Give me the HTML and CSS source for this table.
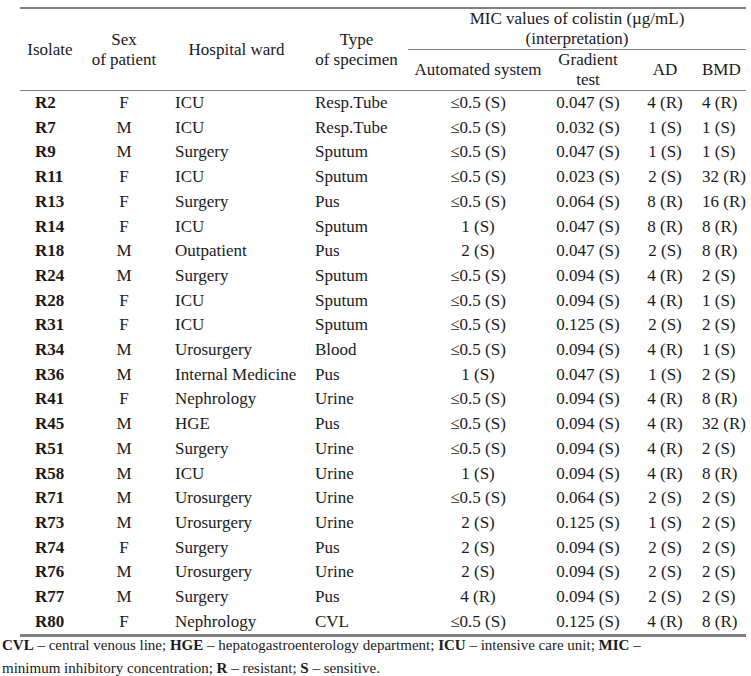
FILE: index.html
```html
<!DOCTYPE html>
<html lang="en">
<head>
<meta charset="utf-8">
<title>MIC values of colistin</title>
<link rel="stylesheet" href="styles.css">
</head>
<body>
<div class="page">
  <table class="mic">
    <colgroup>
      <col class="c-iso"><col class="c-sex"><col class="c-ward"><col class="c-type">
      <col class="c-auto"><col class="c-grad"><col class="c-ad"><col class="c-bmd">
    </colgroup>
    <thead>
      <tr class="h1">
        <th rowspan="2">Isolate</th>
        <th rowspan="2">Sex<br>of patient</th>
        <th rowspan="2">Hospital ward</th>
        <th rowspan="2">Type<br>of specimen</th>
        <th colspan="4" class="mic-group">MIC values of colistin (µg/mL)<br>(interpretation)</th>
      </tr>
      <tr class="h2">
        <th>Automated system</th>
        <th>Gradient<br>test</th>
        <th>AD</th>
        <th class="bmd">BMD</th>
      </tr>
    </thead>
    <tbody>
      <tr><td class="iso">R2</td><td>F</td><td class="ward">ICU</td><td class="type">Resp.Tube</td><td>≤0.5 (S)</td><td>0.047 (S)</td><td>4 (R)</td><td class="bmd">4 (R)</td></tr>
      <tr><td class="iso">R7</td><td>M</td><td class="ward">ICU</td><td class="type">Resp.Tube</td><td>≤0.5 (S)</td><td>0.032 (S)</td><td>1 (S)</td><td class="bmd">1 (S)</td></tr>
      <tr><td class="iso">R9</td><td>M</td><td class="ward">Surgery</td><td class="type">Sputum</td><td>≤0.5 (S)</td><td>0.047 (S)</td><td>1 (S)</td><td class="bmd">1 (S)</td></tr>
      <tr><td class="iso">R11</td><td>F</td><td class="ward">ICU</td><td class="type">Sputum</td><td>≤0.5 (S)</td><td>0.023 (S)</td><td>2 (S)</td><td class="bmd">32 (R)</td></tr>
      <tr><td class="iso">R13</td><td>F</td><td class="ward">Surgery</td><td class="type">Pus</td><td>≤0.5 (S)</td><td>0.064 (S)</td><td>8 (R)</td><td class="bmd">16 (R)</td></tr>
      <tr><td class="iso">R14</td><td>F</td><td class="ward">ICU</td><td class="type">Sputum</td><td>1 (S)</td><td>0.047 (S)</td><td>8 (R)</td><td class="bmd">8 (R)</td></tr>
      <tr><td class="iso">R18</td><td>M</td><td class="ward">Outpatient</td><td class="type">Pus</td><td>2 (S)</td><td>0.047 (S)</td><td>2 (S)</td><td class="bmd">8 (R)</td></tr>
      <tr><td class="iso">R24</td><td>M</td><td class="ward">Surgery</td><td class="type">Sputum</td><td>≤0.5 (S)</td><td>0.094 (S)</td><td>4 (R)</td><td class="bmd">2 (S)</td></tr>
      <tr><td class="iso">R28</td><td>F</td><td class="ward">ICU</td><td class="type">Sputum</td><td>≤0.5 (S)</td><td>0.094 (S)</td><td>4 (R)</td><td class="bmd">1 (S)</td></tr>
      <tr><td class="iso">R31</td><td>F</td><td class="ward">ICU</td><td class="type">Sputum</td><td>≤0.5 (S)</td><td>0.125 (S)</td><td>2 (S)</td><td class="bmd">2 (S)</td></tr>
      <tr><td class="iso">R34</td><td>M</td><td class="ward">Urosurgery</td><td class="type">Blood</td><td>≤0.5 (S)</td><td>0.094 (S)</td><td>4 (R)</td><td class="bmd">1 (S)</td></tr>
      <tr><td class="iso">R36</td><td>M</td><td class="ward">Internal Medicine</td><td class="type">Pus</td><td>1 (S)</td><td>0.047 (S)</td><td>1 (S)</td><td class="bmd">2 (S)</td></tr>
      <tr><td class="iso">R41</td><td>F</td><td class="ward">Nephrology</td><td class="type">Urine</td><td>≤0.5 (S)</td><td>0.094 (S)</td><td>4 (R)</td><td class="bmd">8 (R)</td></tr>
      <tr><td class="iso">R45</td><td>M</td><td class="ward">HGE</td><td class="type">Pus</td><td>≤0.5 (S)</td><td>0.094 (S)</td><td>4 (R)</td><td class="bmd">32 (R)</td></tr>
      <tr><td class="iso">R51</td><td>M</td><td class="ward">Surgery</td><td class="type">Urine</td><td>≤0.5 (S)</td><td>0.094 (S)</td><td>4 (R)</td><td class="bmd">2 (S)</td></tr>
      <tr><td class="iso">R58</td><td>M</td><td class="ward">ICU</td><td class="type">Urine</td><td>1 (S)</td><td>0.094 (S)</td><td>4 (R)</td><td class="bmd">8 (R)</td></tr>
      <tr><td class="iso">R71</td><td>M</td><td class="ward">Urosurgery</td><td class="type">Urine</td><td>≤0.5 (S)</td><td>0.064 (S)</td><td>2 (S)</td><td class="bmd">2 (S)</td></tr>
      <tr><td class="iso">R73</td><td>M</td><td class="ward">Urosurgery</td><td class="type">Urine</td><td>2 (S)</td><td>0.125 (S)</td><td>1 (S)</td><td class="bmd">2 (S)</td></tr>
      <tr><td class="iso">R74</td><td>F</td><td class="ward">Surgery</td><td class="type">Pus</td><td>2 (S)</td><td>0.094 (S)</td><td>2 (S)</td><td class="bmd">2 (S)</td></tr>
      <tr><td class="iso">R76</td><td>M</td><td class="ward">Urosurgery</td><td class="type">Urine</td><td>2 (S)</td><td>0.094 (S)</td><td>2 (S)</td><td class="bmd">2 (S)</td></tr>
      <tr><td class="iso">R77</td><td>M</td><td class="ward">Surgery</td><td class="type">Pus</td><td>4 (R)</td><td>0.094 (S)</td><td>2 (S)</td><td class="bmd">2 (S)</td></tr>
      <tr><td class="iso">R80</td><td>F</td><td class="ward">Nephrology</td><td class="type">CVL</td><td>≤0.5 (S)</td><td>0.125 (S)</td><td>4 (R)</td><td class="bmd">8 (R)</td></tr>
    </tbody>
  </table>
  <p class="note"><b>CVL</b> – central venous line; <b>HGE</b> – hepatogastroenterology department; <b>ICU</b> – intensive care unit; <b>MIC</b> – minimum inhibitory concentration; <b>R</b> – resistant; <b>S</b> – sensitive.</p>
</div>
</body>
</html>
```
FILE: styles.css
```css
html, body {
  margin: 0;
  padding: 0;
  background: #ffffff;
}

body {
  font-family: "Liberation Serif", "Times New Roman", serif;
  font-size: 17px;
  color: #1a1a1a;
}

.page {
  padding: 7px 5px 0 2px;
}

.mic {
  margin-left: 18px;
  width: 726px;
  table-layout: fixed;
  border-collapse: collapse;
  border-top: 2px solid #808080;
  border-bottom: 3px solid #808080;
}

.c-iso { width: 60px; }
.c-sex { width: 88px; }
.c-ward { width: 137px; }
.c-type { width: 103px; }
.c-auto { width: 140px; }
.c-grad { width: 80px; }
.c-ad { width: 74px; }
.c-bmd { width: 44px; }

.mic th {
  font-weight: normal;
  line-height: 20px;
  padding: 0;
  text-align: center;
  vertical-align: middle;
}

.mic .h1 th {
  height: 40px;
}

.mic .h2 th {
  height: 39px;
  border-bottom: 1px solid #808080;
}

.mic .h1 th[rowspan] {
  border-bottom: 1px solid #808080;
}

.mic .mic-group {
  border-bottom: 1px solid #808080;
}

.mic td {
  padding: 0;
  line-height: 24.7px;
  text-align: center;
  white-space: nowrap;
}

.mic td.iso {
  text-align: left;
  padding-left: 15px;
  font-weight: bold;
}

.mic td.ward {
  text-align: left;
  padding-left: 7px;
}

.mic td.type {
  text-align: left;
  padding-left: 10px;
}

.mic .bmd {
  padding-right: 12px;
}

.note {
  margin: -3px 0 0;
  max-width: 650px;
  font-size: 15px;
  line-height: 22.5px;
}
```
